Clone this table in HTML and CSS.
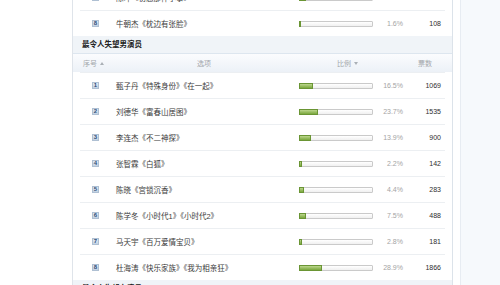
FILE: index.html
```html
<!DOCTYPE html>
<html lang="zh-CN">
<head>
<meta charset="utf-8">
<title>投票结果</title>
<link rel="stylesheet" href="styles.css">
</head>
<body>
<div class="page">
  <div class="left"></div>
  <div class="main">
    <section class="poll poll-first">
      <ol class="rows">
        <li class="row"><span class="rank">7</span><span class="opt">陈坤《初恋那件小事》</span><span class="bar"><span class="fill" style="width:10%"></span></span><span class="pct">7.2%</span><span class="votes">450</span></li>
        <li class="row"><span class="rank">8</span><span class="opt">牛朝杰《枕边有张脸》</span><span class="bar"><span class="fill" style="width:3%"></span></span><span class="pct">1.6%</span><span class="votes">108</span></li>
      </ol>
    </section>
    <section class="poll">
      <h3 class="poll-title">最令人失望男演员</h3>
      <div class="poll-head">
        <span>序号 <i class="up"></i></span>
        <span>选项</span>
        <span>比例 <i class="down"></i></span>
        <span>票数</span>
      </div>
      <ol class="rows">
        <li class="row"><span class="rank">1</span><span class="opt">甄子丹《特殊身份》《在一起》</span><span class="bar"><span class="fill" style="width:19%"></span></span><span class="pct">16.5%</span><span class="votes">1069</span></li>
        <li class="row"><span class="rank">2</span><span class="opt">刘德华《富春山居图》</span><span class="bar"><span class="fill" style="width:27%"></span></span><span class="pct">23.7%</span><span class="votes">1535</span></li>
        <li class="row"><span class="rank">3</span><span class="opt">李连杰《不二神探》</span><span class="bar"><span class="fill" style="width:16%"></span></span><span class="pct">13.9%</span><span class="votes">900</span></li>
        <li class="row"><span class="rank">4</span><span class="opt">张智霖《白狐》</span><span class="bar"><span class="fill" style="width:4%"></span></span><span class="pct">2.2%</span><span class="votes">142</span></li>
        <li class="row"><span class="rank">5</span><span class="opt">陈晓《宫锁沉香》</span><span class="bar"><span class="fill" style="width:7%"></span></span><span class="pct">4.4%</span><span class="votes">283</span></li>
        <li class="row"><span class="rank">6</span><span class="opt">陈学冬《小时代1》《小时代2》</span><span class="bar"><span class="fill" style="width:10%"></span></span><span class="pct">7.5%</span><span class="votes">488</span></li>
        <li class="row"><span class="rank">7</span><span class="opt">马天宇《百万爱情宝贝》</span><span class="bar"><span class="fill" style="width:4%"></span></span><span class="pct">2.8%</span><span class="votes">181</span></li>
        <li class="row"><span class="rank">8</span><span class="opt">杜海涛《快乐家族》《我为相亲狂》</span><span class="bar"><span class="fill" style="width:32%"></span></span><span class="pct">28.9%</span><span class="votes">1866</span></li>
      </ol>
    </section>
    <section class="poll">
      <h3 class="poll-title">最令人失望女演员</h3>
    </section>
  </div>
  <div class="gap"></div>
  <div class="side"></div>
</div>
</body>
</html>
```

FILE: styles.css
```css
html, body {
  margin: 0;
  padding: 0;
  height: 100%;
  overflow: hidden;
  background: #ffffff;
  font-family: "Liberation Sans", "Noto Sans CJK SC", sans-serif;
  color: #333333;
}

.page {
  display: flex;
  height: 100vh;
  overflow: hidden;
}

.left {
  width: 72px;
  flex: none;
  background: #ffffff;
}

.main {
  width: 379px;
  flex: none;
  background: #ffffff;
  border-left: 1px solid #dfe4ea;
  border-right: 1px solid #dce3ea;
  overflow: hidden;
}

.gap {
  width: 7px;
  flex: none;
  background: #ffffff;
}

.side {
  flex: 1;
  background: #f6f9fc;
  border-left: 1px solid #e7ecf2;
}

.poll-first {
  margin-top: -16px;
}

.poll-title {
  margin: 0;
  height: 17px;
  line-height: 17px;
  padding-left: 9px;
  font-size: 7.5px;
  font-weight: bold;
  color: #222222;
  background: #f0f4f8;
  border-bottom: 1px solid #dde6ef;
}

.poll-head {
  display: grid;
  grid-template-columns: 114px 140px 81px auto;
  align-items: center;
  height: 18px;
  padding-left: 10px;
  font-size: 7px;
  color: #a3a7ab;
  background: linear-gradient(#fbfcfe, #ecf1f7);
}

.poll-head span {
  display: flex;
  align-items: center;
  gap: 3px;
}

.up, .down {
  display: inline-block;
  width: 0;
  height: 0;
  border-left: 2.5px solid transparent;
  border-right: 2.5px solid transparent;
}

.up {
  border-bottom: 3px solid #aab0b6;
}

.down {
  border-top: 3px solid #aab0b6;
}

.rows {
  list-style: none;
  margin: 0 7px;
  padding: 0;
}

.row {
  display: grid;
  grid-template-columns: 24px 183px 74px 30px 38px;
  align-items: center;
  height: 25px;
  padding: 0 4px 0 12px;
  border-top: 1px solid #eceff2;
  font-size: 7px;
}

.rank {
  width: 7px;
  height: 7px;
  box-sizing: border-box;
  border: 1px solid #afc0d3;
  background: linear-gradient(#e2eaf3, #c2d2e3);
  color: #2f4f78;
  font-size: 6px;
  font-weight: bold;
  line-height: 5px;
  text-align: center;
}

.opt {
  color: #3a3a3a;
  font-size: 7.5px;
  white-space: nowrap;
}

.bar {
  display: flex;
  height: 6px;
  box-sizing: border-box;
  border: 1px solid #cacaca;
  background: linear-gradient(#ffffff, #f0f0f0);
  border-radius: 1px;
}

.fill {
  height: 6px;
  margin: -1px 0 0 -1px;
  box-sizing: border-box;
  border: 1px solid #6a9534;
  background: linear-gradient(#bcd68c, #7aa73d);
}

.pct {
  text-align: right;
  color: #a4a4a4;
}

.votes {
  text-align: right;
  color: #2e2e2e;
}
```
